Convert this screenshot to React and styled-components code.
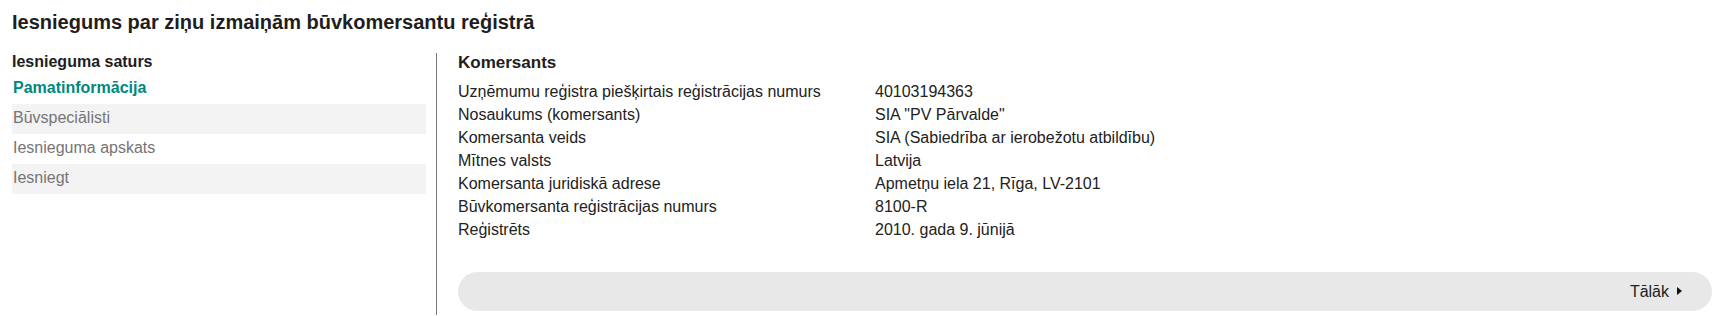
import styled, { createGlobalStyle } from "styled-components";

const GlobalStyle = createGlobalStyle`
  body {
    margin: 0;
    background: #ffffff;
    font-family: "Liberation Sans", Arial, sans-serif;
    color: #222222;
  }
`;

const navItems = [
  { label: "Pamatinformācija", active: true },
  { label: "Būvspeciālisti", shaded: true },
  { label: "Iesnieguma apskats" },
  { label: "Iesniegt", shaded: true },
];

const details = [
  ["Uzņēmumu reģistra piešķirtais reģistrācijas numurs", "40103194363"],
  ["Nosaukums (komersants)", 'SIA "PV Pārvalde"'],
  ["Komersanta veids", "SIA (Sabiedrība ar ierobežotu atbildību)"],
  ["Mītnes valsts", "Latvija"],
  ["Komersanta juridiskā adrese", "Apmetņu iela 21, Rīga, LV-2101"],
  ["Būvkomersanta reģistrācijas numurs", "8100-R"],
  ["Reģistrēts", "2010. gada 9. jūnijā"],
];

export default function App() {
  return (
    <>
      <GlobalStyle />
      <Page>
        <Title>Iesniegums par ziņu izmaiņām būvkomersantu reģistrā</Title>
        <Main>
          <Sidebar>
            <SidebarHeading>Iesnieguma saturs</SidebarHeading>
            {navItems.map((item) => (
              <NavItem key={item.label} $active={item.active} $shaded={item.shaded}>
                {item.label}
              </NavItem>
            ))}
          </Sidebar>
          <Content>
            <SectionTitle>Komersants</SectionTitle>
            <DetailList>
              {details.map(([label, value]) => (
                <DetailRow key={label}>
                  <DetailLabel>{label}</DetailLabel>
                  <DetailValue>{value}</DetailValue>
                </DetailRow>
              ))}
            </DetailList>
            <NavBar>
              <NextButton type="button">
                Tālāk
                <Arrow />
              </NextButton>
            </NavBar>
          </Content>
        </Main>
      </Page>
    </>
  );
}

const Page = styled.div`
  padding: 10px 8px 0 12px;
`;

const Title = styled.h1`
  margin: 0;
  font-size: 20px;
  line-height: 24px;
  font-weight: bold;
  color: #1e1e1e;
`;

const Main = styled.div`
  display: flex;
  margin-top: 19px;
`;

const Sidebar = styled.nav`
  width: 414px;
  flex-shrink: 0;
  margin-right: 10px;
`;

const SidebarHeading = styled.div`
  font-size: 16px;
  line-height: 18px;
  font-weight: bold;
  color: #1e1e1e;
  margin-bottom: 3px;
`;

const NavItem = styled.div`
  padding: 5px 2px 7px 1px;
  font-size: 16px;
  line-height: 18px;
  font-weight: ${(p) => (p.$active ? "bold" : "normal")};
  color: ${(p) => (p.$active ? "#00877f" : "#757575")};
  background: ${(p) => (p.$shaded ? "#f3f3f3" : "transparent")};
`;

const Content = styled.section`
  flex: 1;
  border-left: 1px solid #7a7a7a;
  padding: 0 0 4px 21px;
`;

const SectionTitle = styled.h2`
  margin: 0 0 7px;
  font-size: 17px;
  line-height: 20px;
  font-weight: bold;
  color: #1e1e1e;
`;

const DetailList = styled.div`
  display: flex;
  flex-direction: column;
`;

const DetailRow = styled.div`
  display: grid;
  grid-template-columns: 417px 1fr;
  font-size: 16px;
  line-height: 23px;
`;

const DetailLabel = styled.span`
  color: #222222;
`;

const DetailValue = styled.span`
  color: #222222;
`;

const NavBar = styled.div`
  display: flex;
  justify-content: flex-end;
  align-items: center;
  height: 39px;
  margin-top: 31px;
  padding-right: 30px;
  border-radius: 20px;
  background: #e8e8e8;
`;

const NextButton = styled.button`
  display: flex;
  align-items: center;
  gap: 8px;
  padding: 1px 0 0;
  border: 0;
  background: none;
  font-family: inherit;
  font-size: 16px;
  line-height: 18px;
  color: #222222;
  cursor: pointer;
`;

const Arrow = styled.span`
  width: 0;
  height: 0;
  border-top: 4px solid transparent;
  border-bottom: 4px solid transparent;
  border-left: 5px solid #111111;
  margin-top: -3px;
`;
